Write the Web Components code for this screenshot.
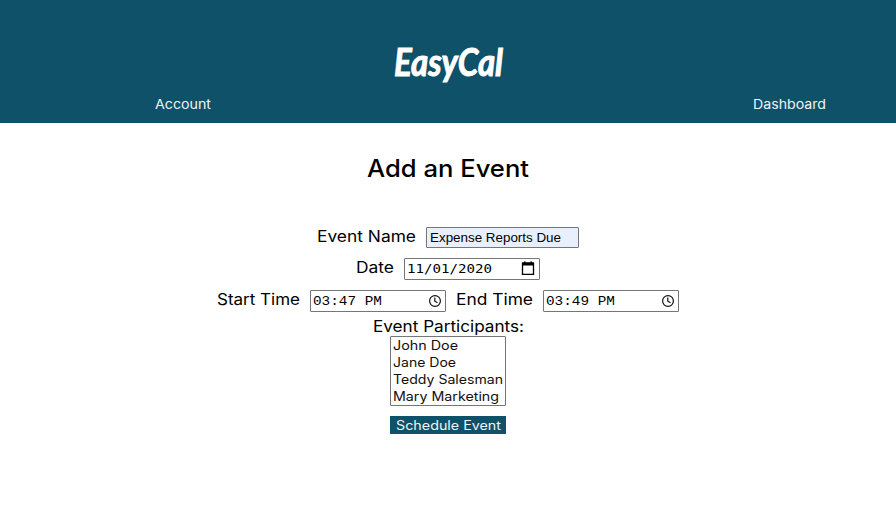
<!DOCTYPE html>
<html lang="en">
<head>
<meta charset="utf-8">
<title>EasyCal</title>
<style>
body { margin: 0; background: #fff; color: #000; font-family: Inter, "Open Sans", sans-serif; font-weight: 370; }
</style>
</head>
<body>
<easy-app></easy-app>
<script>
const attach = (el, html) => { el.attachShadow({ mode: 'open' }).innerHTML = html; };

// A line of text stretched horizontally to the width in its attribute.
customElements.define('fit-text', class extends HTMLElement {
  connectedCallback() {
    attach(this, `<style>
      :host { display: block; flex: none; white-space: nowrap; text-align: left; }
      span { display: inline-block; transform-origin: 0 50%; }
    </style><span></span>`);
    const span = this.shadowRoot.querySelector('span');
    const width = +this.getAttribute('width');
    span.textContent = this.getAttribute('text');
    this.style.width = width + 'px';
    span.style.transform = `scaleX(${width / span.getBoundingClientRect().width})`;
  }
});

customElements.define('site-header', class extends HTMLElement {
  constructor() {
    super();
    attach(this, `<style>
      :host { display: block; box-sizing: border-box; height: 123px; padding-top: 36px; background: #0f5169; color: #fff; }
      .logo { width: 109px; margin: 0 auto; height: 52px; line-height: 50px; padding-left: 1px;
        font-family: "Lato", sans-serif; font-style: italic; font-weight: 700; font-size: 38px;
        -webkit-text-stroke: 1px #fff; stroke-linejoin: round; }
      nav { display: flex; justify-content: space-between; padding: 6px 70px 0 155px; font-size: 13px; line-height: 21px; color: #f0f4f6; }
    </style>
    <div class="logo"><fit-text width="109" text="EasyCal"></fit-text></div>
    <nav><fit-text width="56" text="Account"></fit-text><fit-text width="73" text="Dashboard"></fit-text></nav>`);
  }
});

customElements.define('form-row', class extends HTMLElement {
  constructor() {
    super();
    attach(this, `<style>
      :host { display: flex; justify-content: center; gap: 10px; margin-bottom: 10px; font-size: 15.5px; line-height: 19px; }
    </style><slot></slot>`);
  }
});

customElements.define('input-box', class extends HTMLElement {
  constructor() {
    super();
    const icons = {
      date: '<svg width="14" height="15" viewBox="0 0 14 15"><path d="M1.5 2h11v11.3h-11z" fill="none" stroke="#000" stroke-width="1.3"/><path d="M1 2h12v2.6H1zM3 .5h1.6V3H3zM9.4.5H11V3H9.4z"/></svg>',
      time: '<svg width="14" height="14" viewBox="0 0 14 14" fill="none" stroke="#111" stroke-width="1.2"><circle cx="7" cy="7" r="5.4"/><path d="M6.8 3.6v3.6l2.7 1.6"/></svg>'
    };
    attach(this, `<style>
      :host { display: flex; box-sizing: border-box; width: 136px; height: 22px; align-items: center; justify-content: space-between;
        border: 1px solid #767676; border-radius: 1px; padding: 0 3px; background: #fff; font-weight: 400; }
      :host([kind=text]) { width: 153px; height: 21px; background: #e8f0fe; font: 13px/19px "Liberation Sans", sans-serif; }
      :host([kind=date]) { padding: 0 4px 0 2px; font: 12px/22px "DejaVu Sans Mono", monospace; }
      :host([kind=time]) { padding-left: 2px; font: 13px/20px "Liberation Mono", monospace; }
      :host([kind=time]) ::slotted(*) { margin-top: 2px; }
      :host([kind=date]) svg { margin-bottom: 1px; }
      svg { flex: none; display: block; }
    </style><slot></slot>${icons[this.getAttribute('kind')] || ''}`);
  }
});

customElements.define('participant-list', class extends HTMLElement {
  constructor() {
    super();
    attach(this, `<style>
      :host { display: block; box-sizing: border-box; width: 116px; height: 70px; margin: 0 auto 10px;
        border: 1px solid #767676; border-radius: 1px; padding: 0 2px; font-size: 12.5px; line-height: 17px; color: #101010; }
    </style><slot></slot>`);
  }
});

customElements.define('action-button', class extends HTMLElement {
  constructor() {
    super();
    attach(this, `<style>
      :host { display: block; box-sizing: border-box; width: 116px; height: 18px; margin: 0 auto; padding-left: 6px;
        background: #0f5169; color: #f0f4f6; font-size: 12.5px; line-height: 20px; cursor: pointer; }
    </style><slot></slot>`);
  }
});

customElements.define('easy-app', class extends HTMLElement {
  constructor() {
    super();
    attach(this, `<style>
      :host { display: block; min-height: 513px; }
      h1 { width: 162px; margin: 29px auto 43px; height: 32px; font-size: 24px; line-height: 33px; font-weight: 500; }
      .caption { width: 150px; margin: -5px auto 0; height: 19px; font-size: 15.5px; line-height: 19px; }
    </style>
    <site-header></site-header>
    <main>
      <h1><fit-text width="162" text="Add an Event"></fit-text></h1>
      <form-row><fit-text width="99" text="Event Name"></fit-text><input-box kind="text"><fit-text width="131" text="Expense Reports Due"></fit-text></input-box></form-row>
      <form-row><fit-text width="38" text="Date"></fit-text><input-box kind="date"><fit-text width="85" text="11/01/2020"></fit-text></input-box></form-row>
      <form-row><fit-text width="83" text="Start Time"></fit-text><input-box kind="time"><fit-text width="69" text="03:47 PM"></fit-text></input-box><fit-text width="77" text="End Time"></fit-text><input-box kind="time"><fit-text width="69" text="03:49 PM"></fit-text></input-box></form-row>
      <div class="caption"><fit-text width="151" text="Event Participants:"></fit-text></div>
      <participant-list>
        <fit-text width="65" text="John Doe"></fit-text>
        <fit-text width="63" text="Jane Doe"></fit-text>
        <fit-text width="110" text="Teddy Salesman"></fit-text>
        <fit-text width="106" text="Mary Marketing"></fit-text>
      </participant-list>
      <action-button><fit-text width="105" text="Schedule Event"></fit-text></action-button>
    </main>`);
  }
});
</script>
</body>
</html>
